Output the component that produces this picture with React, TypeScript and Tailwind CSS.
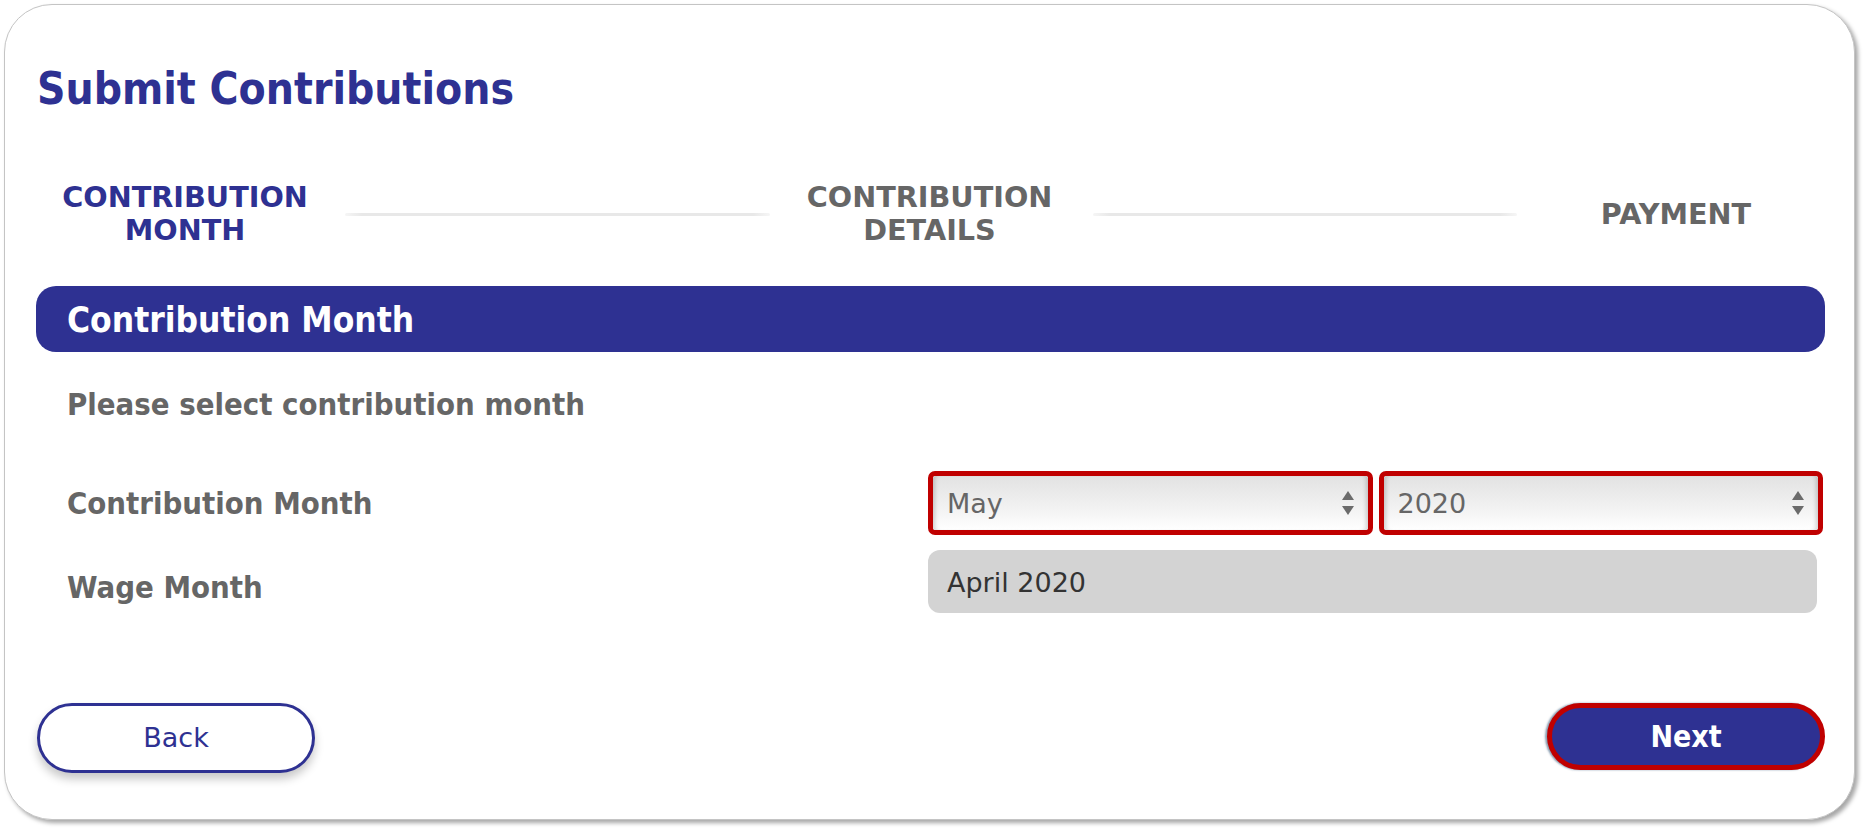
import React from "react";

function Arrows() {
  return (
    <svg width="12" height="24" viewBox="0 0 12 24" className="shrink-0">
      <polygon points="6,0 12,9 0,9" fill="#6b6b6b" />
      <polygon points="0,15 12,15 6,24" fill="#6b6b6b" />
    </svg>
  );
}

function FakeSelect({ value }: { value: string }) {
  return (
    <div className="flex-1 h-[64px] rounded-[7px] border-[5px] border-[#c00000] bg-white">
      <div className="h-full w-full flex items-center justify-between pl-[14px] pr-[14px] rounded-[3px] bg-[linear-gradient(to_bottom,#e2e2e2,#f2f2f2_60%,#ffffff)] shadow-[inset_5px_0_4px_-3px_rgba(0,0,0,0.18),inset_-5px_0_4px_-3px_rgba(0,0,0,0.18)]">
        <span className="font-['DejaVu_Sans',sans-serif] text-[27px] leading-none text-[#666666]">{value}</span>
        <Arrows />
      </div>
    </div>
  );
}

export default function App() {
  return (
    <div className="w-[1868px] h-[834px] bg-white pt-[4px] pl-[4px]">
      <div className="w-[1851px] h-[816px] rounded-[48px] border border-[#c4c4c4] bg-white shadow-[3px_3px_4px_rgba(0,0,0,0.35)] pl-[31px] pr-[29px] pt-[60px] flex flex-col">
        <h1 className="font-['DejaVu_Sans_Condensed','DejaVu_Sans',sans-serif] font-bold text-[44px] leading-[48px] text-[#2e3192] pl-[1px]">
          Submit Contributions
        </h1>

        <div className="mt-[68px] h-[66px] flex items-center font-['DejaVu_Sans',sans-serif] font-bold text-[28.7px] leading-[33px]">
          <div className="w-[298px] text-center text-[#2e3192]">
            CONTRIBUTION
            <br />
            MONTH
          </div>
          <div className="flex-1 h-[3px] ml-[11px] mr-[11px] bg-[linear-gradient(to_right,#f6f6f6,#e8e8e8_4%,#e8e8e8_96%,#f6f6f6)] rounded-full" />
          <div className="w-[298px] text-center text-[#666666]">
            CONTRIBUTION
            <br />
            DETAILS
          </div>
          <div className="flex-1 h-[3px] ml-[14px] mr-[10px] bg-[linear-gradient(to_right,#f6f6f6,#e8e8e8_4%,#e8e8e8_96%,#f6f6f6)] rounded-full" />
          <div className="w-[298px] text-center text-[#666666]">PAYMENT</div>
        </div>

        <div className="mt-[39px] h-[66px] rounded-[20px] bg-[#2e3192] flex items-center pl-[31px] pt-[3px] font-['DejaVu_Sans_Condensed','DejaVu_Sans',sans-serif] font-bold text-[35px] text-white">
          Contribution Month
        </div>

        <div className="mt-[34px] pl-[31px] font-['DejaVu_Sans_Condensed','DejaVu_Sans',sans-serif] font-bold text-[30.8px] leading-[36px] text-[#666666]">
          Please select contribution month
        </div>

        <div className="mt-[39px] grid grid-cols-[892px_1fr]">
          <div className="h-[84px] flex items-center pl-[31px] font-['DejaVu_Sans_Condensed','DejaVu_Sans',sans-serif] font-bold text-[30.8px] text-[#666666]">
            Contribution Month
          </div>
          <div className="h-[84px] flex items-center gap-[6px] pr-[2px]">
            <FakeSelect value="May" />
            <FakeSelect value="2020" />
          </div>
          <div className="h-[84px] flex items-center pl-[31px] font-['DejaVu_Sans_Condensed','DejaVu_Sans',sans-serif] font-bold text-[30.8px] text-[#666666]">
            Wage Month
          </div>
          <div className="h-[84px] pt-[5px]">
            <div className="w-[889px] h-[63px] rounded-[12px] bg-[#d3d3d3] flex items-center pl-[19px] pt-[3px] font-['DejaVu_Sans',sans-serif] text-[27px] text-[#333333]">
              April 2020
            </div>
          </div>
        </div>

        <div className="mt-[74px] flex justify-between items-start">
          <button className="ml-[1px] w-[278px] h-[70px] rounded-full border-[3px] border-[#2e3192] bg-white shadow-[0_6px_10px_rgba(0,0,0,0.22)] font-['DejaVu_Sans',sans-serif] text-[27px] text-[#2e3192]">
            Back
          </button>
          <button className="w-[278px] h-[67px] rounded-full border-[5px] border-[#c00000] bg-[#2e3192] shadow-[-2px_0_2px_rgba(20,60,100,0.5)] font-['DejaVu_Sans_Condensed','DejaVu_Sans',sans-serif] font-bold text-[30px] text-white">
            Next
          </button>
        </div>
      </div>
    </div>
  );
}
